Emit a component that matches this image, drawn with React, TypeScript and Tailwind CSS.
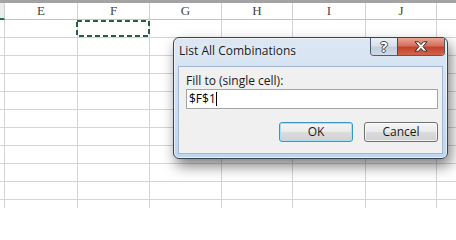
import React from "react";

const cols = [
  { w: "w-[5px]", label: "" },
  { w: "w-[73px]", label: "E" },
  { w: "w-[72px]", label: "F" },
  { w: "w-[72px]", label: "G" },
  { w: "w-[71px]", label: "H" },
  { w: "w-[73px]", label: "I" },
  { w: "w-[71px]", label: "J" },
  { w: "flex-1", label: "" },
];

const rows = Array.from({ length: 11 }, (_, i) => i);

function Sheet() {
  return (
    <div className="flex flex-col w-[456px] h-[208px] bg-white overflow-hidden">
      <div className="h-[3px] shrink-0 bg-[#a3a3a3]" />
      <div className="flex h-[17px] shrink-0">
        {cols.map((c, i) => (
          <div
            key={i}
            className={`${c.w} shrink-0 h-full ${i === 0 ? "border-b-2 border-b-[#217346] bg-[#ececec]" : "border-b border-b-[#c2c2c2]"} ${i < cols.length - 1 ? "border-r border-r-[#d0d0d0]" : ""} flex items-center justify-center text-[13px] leading-[16px] text-[#444] font-['Liberation_Serif',serif]`}
          >
            {c.label}
          </div>
        ))}
      </div>
      {rows.map((r) => (
        <div key={r} className="flex h-[18px] shrink-0 border-b border-b-[#d4d4d4]">
          {cols.map((c, i) => (
            <div
              key={i}
              className={`${c.w} shrink-0 h-full relative ${i < cols.length - 1 ? "border-r border-r-[#d4d4d4]" : ""}`}
            >
              {r === 0 && i === 2 && (
                <svg className="absolute left-[-2px] top-0 w-[74px] h-[17px]" viewBox="0 0 74 17">
                  <rect x="1" y="1" width="72" height="15" fill="none" stroke="#22643c" strokeWidth="2" strokeDasharray="5 3" />
                </svg>
              )}
            </div>
          ))}
        </div>
      ))}
    </div>
  );
}

function Dialog() {
  return (
    <div className="absolute left-[173px] top-[37px] w-[275px] h-[122px] rounded-[6px] border border-[#37444f] bg-[linear-gradient(to_bottom,#dde7f2_0%,#d1e1f2_40%,#bfd6ef_100%)] shadow-[3px_7px_14px_rgba(0,0,0,0.5),inset_0_0_0_1px_rgba(255,255,255,0.6)] flex flex-col font-['Open_Sans',sans-serif]">
      <div className="h-[28px] shrink-0 pl-[5px] pt-[5px] text-[12px] leading-[16px] text-[#1a1a1a] [text-shadow:0_0_6px_rgba(255,255,255,0.95)]">
        List All Combinations
      </div>
      <div className="absolute top-0 right-[2px] flex h-[18px] border border-t-0 border-[#4f5d6c] rounded-b-[4px] overflow-hidden">
        <div className="w-[26px] h-full flex items-center justify-center bg-[linear-gradient(to_bottom,#e9eff5_0%,#d8e1eb_45%,#c2cfdd_55%,#cfdae6_100%)] text-white text-[14px] font-bold leading-none [text-shadow:1px_0_#3d4753,-1px_0_#3d4753,0_1px_#3d4753,0_-1px_#3d4753]">
          ?
        </div>
        <div className="w-[47px] h-full flex items-center justify-center border-l border-l-[#5a4540] bg-[linear-gradient(to_bottom,#e8a795_0%,#d6705c_45%,#c2432c_56%,#d3654d_100%)]">
          <svg width="14" height="11" viewBox="0 0 14 11">
            <polygon
              points="1,0.8 4.6,0.8 7,3.6 9.4,0.8 13,0.8 9,5.5 13,10.2 9.4,10.2 7,7.4 4.6,10.2 1,10.2 5,5.5"
              fill="#ffffff"
              stroke="#3b2a26"
              strokeWidth="1"
              strokeLinejoin="round"
            />
          </svg>
        </div>
      </div>
      <div className="flex-1 mx-[4px] mb-[4px] bg-[#f0f0f0] border border-[#a3b8d0] pl-[7px] pr-[4px] pt-[6px] flex flex-col">
        <div className="text-[12px] leading-[16px] text-[#1a1a1a]">Fill to (single cell):</div>
        <div className="h-[20px] w-full bg-white border border-[#a4a4a4] flex items-center pl-[2px] text-[12px] leading-[16px] text-black">
          <span>$F$1</span>
          <span className="inline-block w-px h-[14px] bg-black" />
        </div>
        <div className="mt-[13px] flex justify-end gap-[11px]">
          <button className="w-[74px] h-[20px] rounded-[3px] border border-[#3c95c4] shadow-[inset_0_0_0_1px_#a9e0f6] bg-[linear-gradient(to_bottom,#f4f4f4_0%,#ebebeb_48%,#dcdcdc_52%,#d0d0d0_100%)] text-[12px] leading-[16px] text-[#1a1a1a]">
            OK
          </button>
          <button className="w-[74px] h-[20px] rounded-[3px] border border-[#707070] shadow-[inset_0_0_0_1px_rgba(255,255,255,0.7)] bg-[linear-gradient(to_bottom,#f4f4f4_0%,#ebebeb_48%,#dcdcdc_52%,#d0d0d0_100%)] text-[12px] leading-[16px] text-[#1a1a1a]">
            Cancel
          </button>
        </div>
      </div>
    </div>
  );
}

export default function App() {
  return (
    <div className="relative w-[456px] h-[208px] overflow-hidden bg-white">
      <Sheet />
      <Dialog />
    </div>
  );
}
